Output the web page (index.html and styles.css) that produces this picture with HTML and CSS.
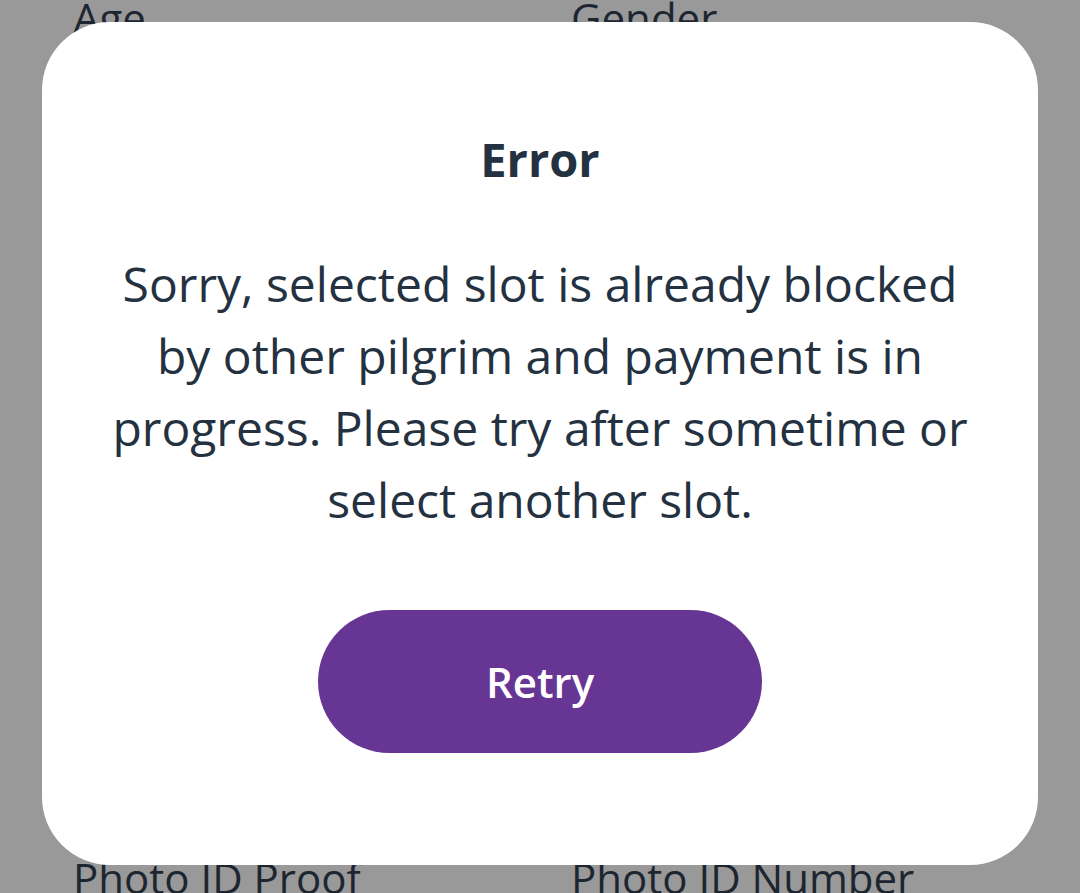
FILE: index.html
```html
<!DOCTYPE html>
<html lang="en">
<head>
<meta charset="utf-8">
<title>Error</title>
<link rel="stylesheet" href="styles.css">
</head>
<body>
<div class="form">
  <div class="field"><span class="label">Age</span></div>
  <div class="field"><span class="label">Gender</span></div>
  <div class="field"><span class="label">Photo ID Proof</span></div>
  <div class="field"><span class="label">Photo ID Number</span></div>
</div>
<div class="overlay">
  <div class="dialog" role="alertdialog">
    <h2 class="dialog-title">Error</h2>
    <p class="dialog-text">Sorry, selected slot is already blocked by other pilgrim and payment is in progress. Please try after sometime or select another slot.</p>
    <button class="dialog-btn">Retry</button>
  </div>
</div>
</body>
</html>
```
FILE: styles.css
```css
html, body {
  margin: 0;
  padding: 0;
  height: 100%;
  overflow: hidden;
}
body {
  background: #999999;
  font-family: "Open Sans", "Noto Sans", sans-serif;
  color: #1d2630;
}
.form {
  display: grid;
  grid-template-columns: 498px 1fr;
  row-gap: 824px;
  padding-left: 73px;
}
.label {
  display: block;
  font-size: 42px;
  line-height: 36px;
  white-space: nowrap;
}
.overlay {
  position: fixed;
  inset: 0;
  display: flex;
  align-items: flex-start;
  justify-content: flex-start;
  padding: 22px 0 0 42px;
}
.dialog {
  box-sizing: border-box;
  width: 996px;
  height: 843px;
  background: #ffffff;
  border-radius: 68px;
  display: flex;
  flex-direction: column;
  align-items: center;
  padding: 101px 60px 0;
  color: #233140;
  text-align: center;
}
.dialog-title {
  margin: 0;
  font-size: 47px;
  font-weight: 700;
  line-height: 72px;
}
.dialog-text {
  margin: 53px 0 0;
  font-size: 48px;
  line-height: 72px;
  font-weight: 400;
}
.dialog-btn {
  margin-top: 74px;
  width: 444px;
  height: 143px;
  border: none;
  border-radius: 72px;
  background: #673695;
  color: #ffffff;
  font-family: "Open Sans", "Noto Sans", sans-serif;
  font-size: 42px;
  font-weight: 600;
  padding: 0;
  display: flex;
  align-items: center;
  justify-content: center;
}
```
